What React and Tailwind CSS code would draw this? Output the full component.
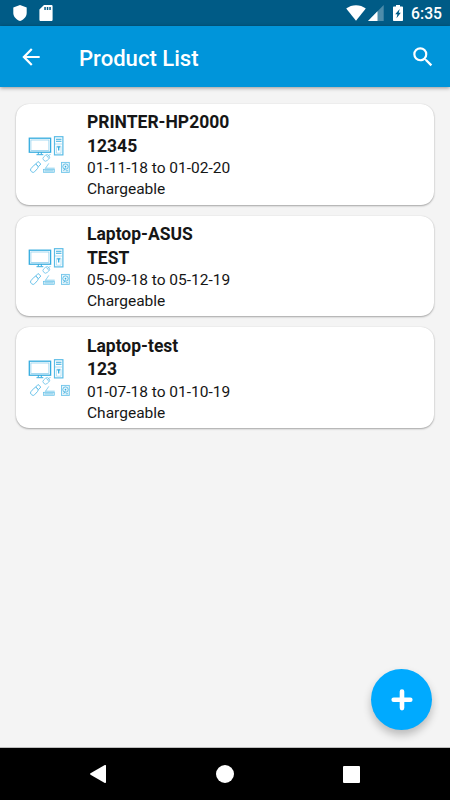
import React from "react";

const products = [
  { name: "PRINTER-HP2000", serial: "12345", period: "01-11-18 to 01-02-20", type: "Chargeable" },
  { name: "Laptop-ASUS", serial: "TEST", period: "05-09-18 to 05-12-19", type: "Chargeable" },
  { name: "Laptop-test", serial: "123", period: "01-07-18 to 01-10-19", type: "Chargeable" },
];

function DevicesIcon() {
  return (
    <svg width="44" height="40" viewBox="0 0 44 40" fill="none" stroke="#35acdf" className="mt-px shrink-0">
      {/* monitor */}
      <rect x="2.3" y="3.2" width="21.3" height="14" strokeWidth="1.3" />
      <rect x="3.9" y="5" width="18" height="10.4" stroke="#8fd0ee" strokeWidth=".8" />
      <path d="M11.3 17v2.3M14.3 17v2.3M9.5 19.7h6.8" strokeWidth="1" />
      {/* tower */}
      <rect x="27.5" y="1.7" width="8.4" height="18.2" stroke="#5bbce6" strokeWidth="1.2" />
      <path d="M29 4.2h5.5M29 6.2h5.5" strokeWidth="1.1" />
      <path d="M28 9h7.5" stroke="#8fd0ee" strokeWidth=".7" />
      <path d="M29.5 18.2v-7h4.5v7z" stroke="#8fd0ee" strokeWidth=".6" />
      <path d="M30.2 11.8h3M31.7 11.5v4" strokeWidth="1.3" />
      {/* mouse */}
      <g stroke="#70c5ea" strokeWidth=".8">
        <rect x="15.8" y="20.4" width="7" height="5" rx="2.4" transform="rotate(-42 19.3 22.9)" />
        <path d="M19.2 20.3l2.7 3M20.4 21.7l1.9-1.7M22.3 20.3l1.2-1.3" />
      </g>
      {/* usb stick */}
      <g stroke="#65c0e8" strokeWidth=".9" transform="rotate(-48 8.5 32)">
        <rect x="2.4" y="29.7" width="8.5" height="4.8" rx="2" />
        <rect x="10.9" y="30.2" width="3.4" height="3.8" />
      </g>
      {/* router */}
      <path d="M18.2 33.7l3.6-5.3M18.4 33.2h9.3" stroke="#70c5ea" strokeWidth=".8" />
      <rect x="16.6" y="34.3" width="10.7" height="3" fill="#c7e8f6" stroke="#65c0e8" strokeWidth=".7" />
      <path d="M18.5 35.8h7" strokeWidth=".7" strokeDasharray="1 1" />
      {/* hard disk */}
      <rect x="34.5" y="27.4" width="7.8" height="10" fill="#e7f5fb" stroke="#70c5ea" strokeWidth=".9" />
      <circle cx="38.5" cy="31.6" r="2.7" strokeWidth=".7" />
      <circle cx="38.5" cy="31.6" r=".8" fill="#35acdf" stroke="none" />
      <path d="M38.6 32.5l-2 3.4M38.8 35.8h2.3" strokeWidth=".7" />
    </svg>
  );
}

function StatusBar() {
  return (
    <div className="flex h-[26px] items-center justify-between bg-[#005b86] pr-[8px] pl-[13px] text-white">
      <div className="flex items-center gap-[12px]">
        <svg width="14" height="16" viewBox="0 0 14 16" fill="currentColor">
          <path d="M7 0l6.7 2.4v5.4c0 3.9-2.8 7-6.7 8.2C3.1 14.8.3 11.7.3 7.8V2.4z" />
        </svg>
        <svg width="14" height="16" viewBox="0 0 14 16" fill="currentColor">
          <path fillRule="evenodd" d="M5 0h7.3c.8 0 1.3.5 1.3 1.3v13.4c0 .8-.5 1.3-1.3 1.3H1.7C.9 16 .4 15.5.4 14.7V4.6zM5.3 2v3h1.5V2zm2.5 0v3h1.5V2zm2.5 0v3h1.5V2z" />
        </svg>
      </div>
      <div className="flex items-center">
        <svg width="20" height="16" viewBox="0 0 20 16" fill="currentColor">
          <path d="M.2 3.6C5.7-1 14.3-1 19.8 3.6L10 15.8z" />
        </svg>
        <svg width="16" height="16" viewBox="0 0 16 16" fill="currentColor" className="ml-[2px]">
          <path d="M15.7 0v16H0z" opacity=".3" />
          <path d="M9.5 6.3V16H0z" />
        </svg>
        <svg width="10" height="16" viewBox="0 0 10 16" fill="currentColor" className="ml-[9px]">
          <path fillRule="evenodd" d="M3 0h4v1.5h2.2c.5 0 .8.3.8.8v12.9c0 .5-.3.8-.8.8H.8c-.5 0-.8-.3-.8-.8V2.3c0-.5.3-.8.8-.8H3zM6.7 4L2.2 9.3h2.2L3.5 13.2 7.8 7.8H5.7z" />
        </svg>
        <span className="ml-[8px] pt-[2px] text-[15.7px] leading-[24px] font-medium">6:35</span>
      </div>
    </div>
  );
}

function ProductCard({ product }) {
  return (
    <div className="flex h-[100.7px] items-center rounded-[13px] bg-white pl-[11px] shadow-[0_1px_2px_rgba(0,0,0,0.32),0_0_1px_rgba(0,0,0,0.15)]">
      <DevicesIcon />
      <div className="ml-[16px] pt-[3px] text-[15.53px] leading-[21px] text-[#161616]">
        <div className="text-[17.5px] leading-[23.6px] font-bold">{product.name}</div>
        <div className="text-[17.5px] leading-[23.6px] font-bold">{product.serial}</div>
        <div>{product.period}</div>
        <div>{product.type}</div>
      </div>
    </div>
  );
}

export default function App() {
  return (
    <div className="relative flex h-[800px] w-[450px] flex-col overflow-hidden bg-[#f4f4f4] font-['Roboto',sans-serif]">
      <StatusBar />
      <header className="flex h-[61px] items-center bg-[#0095da] pr-[14px] pl-[18px] text-white shadow-[0_1px_4px_rgba(0,0,0,0.4)]">
        <svg width="26" height="26" viewBox="0 0 24 24" fill="currentColor" aria-label="Back">
          <path d="M20 11H7.83l5.59-5.59L12 4l-8 8 8 8 1.41-1.41L7.83 13H20z" />
        </svg>
        <h1 className="ml-[35px] flex-1 pt-[2px] text-[22.1px] leading-[26px] font-medium">Product List</h1>
        <svg width="26" height="26" viewBox="0 0 24 24" fill="currentColor" aria-label="Search">
          <path d="M15.5 14h-.79l-.28-.27A6.471 6.471 0 0 0 16 9.5 6.5 6.5 0 1 0 9.5 16c1.61 0 3.09-.59 4.23-1.57l.27.28v.79l5 4.99L20.49 19zm-6 0a4.5 4.5 0 1 1 0-9 4.5 4.5 0 0 1 0 9z" />
        </svg>
      </header>
      <main className="flex flex-1 flex-col gap-[11px] border-b border-[#bdbdbd] px-4 pt-[17px]">
        {products.map((product) => (
          <ProductCard key={product.name} product={product} />
        ))}
      </main>
      <button
        aria-label="Add product"
        className="absolute top-[669px] left-[371px] flex h-[61px] w-[61px] items-center justify-center rounded-full bg-[#00aaff] text-white shadow-[0_5px_9px_rgba(0,0,0,0.24)]"
      >
        <svg width="22" height="22" viewBox="0 0 22 22" stroke="currentColor" strokeWidth="4.6" strokeLinecap="round">
          <path d="M11 2.5v16.6M2.7 10.8h16.6" />
        </svg>
      </button>
      <nav className="flex h-[52px] items-center bg-black pl-[90px]">
        <svg width="16" height="18" viewBox="0 0 16 18" fill="white">
          <path d="M.5 8.3L14.8.1q1.2-.5 1.2.8v16.2q0 1.3-1.2.8L.5 9.7q-.8-.7 0-1.4z" />
        </svg>
        <div className="ml-[110px] h-[18px] w-[18px] rounded-full bg-white" />
        <div className="ml-[109px] h-[17px] w-[17px] rounded-[1px] bg-white" />
      </nav>
    </div>
  );
}
